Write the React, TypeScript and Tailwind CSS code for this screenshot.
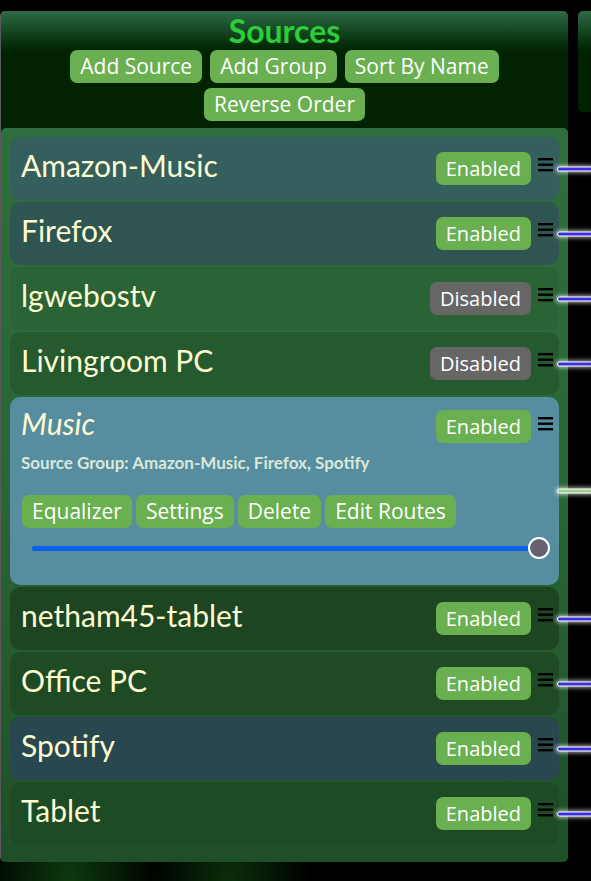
import React from "react";

type Source = {
  name: string;
  enabled: boolean;
  bg: string;
};

const sources: Source[] = [
  { name: "Amazon-Music", enabled: true, bg: "bg-[#345f5d]" },
  { name: "Firefox", enabled: true, bg: "bg-[#2e5551]" },
  { name: "lgwebostv", enabled: false, bg: "bg-[#2a6435]" },
  { name: "Livingroom PC", enabled: false, bg: "bg-[#25592e]" },
];

const after: Source[] = [
  { name: "netham45-tablet", enabled: true, bg: "bg-[#1d4522]" },
  { name: "Office PC", enabled: true, bg: "bg-[#1e4a24]" },
  { name: "Spotify", enabled: true, bg: "bg-[#29474f]" },
  { name: "Tablet", enabled: true, bg: "bg-[#1d4b25]" },
];

function Hamburger() {
  return (
    <svg width="15" height="15" viewBox="0 0 15 15" className="shrink-0">
      <rect x="0" y="1" width="15" height="2.4" fill="#000" />
      <rect x="0" y="6.5" width="15" height="2.4" fill="#000" />
      <rect x="0" y="12" width="15" height="2.4" fill="#000" />
    </svg>
  );
}

function Wire({ green }: { green?: boolean }) {
  return (
    <div
      className={`absolute right-[-34px] top-1/2 h-[5px] w-[36px] -translate-y-1/2 rounded-l-full border border-white shadow-[0_0_4px_1px_rgba(255,255,255,0.7)] ${
        green ? "bg-[#9fd08a]" : "bg-[#3a2fe0]"
      }`}
    />
  );
}

function Badge({ enabled }: { enabled: boolean }) {
  return (
    <span
      className={`rounded-[7px] px-[10px] text-[20px] leading-[33px] text-white ${
        enabled ? "bg-[#6aaf50]" : "bg-[#666666]"
      }`}
    >
      {enabled ? "Enabled" : "Disabled"}
    </span>
  );
}

function Btn({ label }: { label: string }) {
  return (
    <button className="rounded-[7px] bg-[#6aaf50] px-[10px] text-[21px] leading-[33px] text-white">
      {label}
    </button>
  );
}

function Row({ s }: { s: Source }) {
  return (
    <div className={`relative flex h-[63px] items-start justify-between rounded-[10px] ${s.bg} pl-[11px] pr-[6px]`}>
      <span className="mt-[10px] text-[30px] leading-[36px] text-[#fdfbd2]" style={{ fontFamily: "Lato, sans-serif" }}>
        {s.name}
      </span>
      <div className="mt-[15px] flex items-start gap-[7px]">
        <Badge enabled={s.enabled} />
        <div className="mt-[5px]">
          <Hamburger />
        </div>
      </div>
      <Wire />
    </div>
  );
}

function GroupRow() {
  return (
    <div className="relative flex h-[188px] flex-col rounded-[10px] bg-[#568e9f] pl-[11px] pr-[6px]">
      <div className="flex items-start justify-between">
        <span className="mt-[8px] text-[30px] italic leading-[36px] text-[#fdfbd2]" style={{ fontFamily: "Lato, sans-serif" }}>
          Music
        </span>
        <div className="mt-[13px] flex items-start gap-[7px]">
          <Badge enabled />
          <div className="mt-[6px]">
            <Hamburger />
          </div>
        </div>
      </div>
      <div className="mt-[10px] text-[17px] font-bold leading-[20px] text-[#dbe8d8]" style={{ fontFamily: "Lato, sans-serif" }}>
        Source Group: Amazon-Music, Firefox, Spotify
      </div>
      <div className="mt-[22px] flex gap-[4px] pl-[1px]">
        <Btn label="Equalizer" />
        <Btn label="Settings" />
        <Btn label="Delete" />
        <Btn label="Edit Routes" />
      </div>
      <div className="relative ml-[11px] mr-[14px] mt-[10px] flex h-[20px] items-center">
        <div className="h-[5px] flex-1 rounded-full bg-[#0a62e6]" />
        <div className="absolute right-[-11px] h-[22px] w-[22px] rounded-full border-2 border-white bg-[#666272]" />
      </div>
      <Wire green />
    </div>
  );
}

export default function App() {
  return (
    <div
      className="min-h-[881px] overflow-hidden bg-black bg-[radial-gradient(ellipse_at_70px_880px,#0c3a0c_0%,transparent_90px),radial-gradient(ellipse_at_230px_890px,#0a300a_0%,transparent_80px)] pt-[11px]"
      style={{ fontFamily: "'Open Sans', sans-serif" }}
    >
      <div className="flex items-start">
        <div className="w-[568px] shrink-0 rounded-[5px] border-l border-[#5a5a5a] bg-[#002100] bg-[linear-gradient(to_bottom,#2f6a47_0px,#0b3812_28px,#012301_40px,#002100_100%)]">
          <h1 className="pt-[1px] text-center text-[32px] font-bold leading-[37px] text-[#2dcc3a]" style={{ fontFamily: "Lato, sans-serif" }}>
            Sources
          </h1>
          <div className="mx-auto mt-[1px] flex w-[440px] flex-wrap justify-center gap-x-[8px] gap-y-[5px]">
            <Btn label="Add Source" />
            <Btn label="Add Group" />
            <Btn label="Sort By Name" />
            <Btn label="Reverse Order" />
          </div>
          <div className="mt-[7px] flex flex-col gap-[2px] rounded-[5px] bg-[#2b6738] bg-[linear-gradient(to_bottom,#2f6e3d,#2a6535_50%,#1f4f28)] px-[9px] pb-[17px] pt-[9px]">
            {sources.map((s) => (
              <Row key={s.name} s={s} />
            ))}
            <GroupRow />
            {after.map((s) => (
              <Row key={s.name} s={s} />
            ))}
          </div>
        </div>
        <div className="ml-[10px] h-[101px] flex-1 rounded-l-[5px] bg-[#002100] bg-[linear-gradient(to_bottom,#2f6a47_0px,#0b3812_28px,#012301_40px,#002100_100%)]" />
      </div>
    </div>
  );
}
